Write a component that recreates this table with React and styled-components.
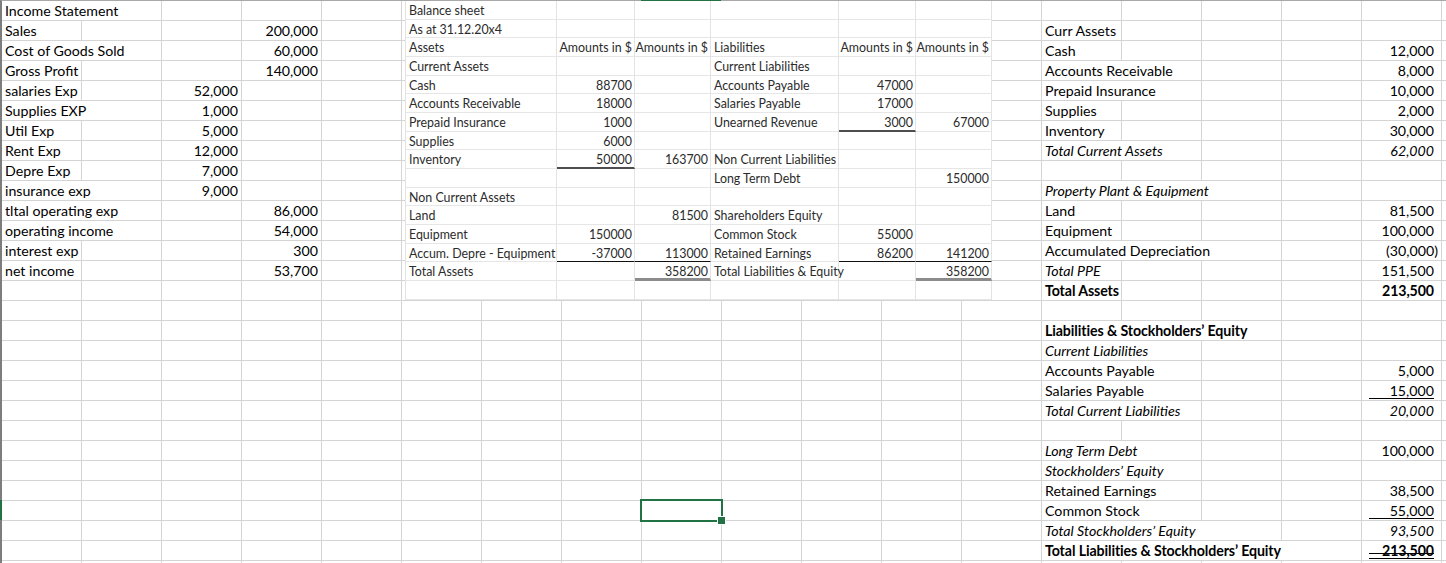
import styled, { createGlobalStyle, css } from 'styled-components';

const COLS = 19;
const ROWS = 29;

const Global = createGlobalStyle`
  html, body {
    margin: 0;
    padding: 0;
    background: #ffffff;
    overflow: hidden;
  }
  * { box-sizing: border-box; }
`

const Sheet = styled.div`
  position: relative;
  width: 1446px;
  height: 563px;
  overflow: hidden;
  background: #ffffff;
  font-family: Lato, "Liberation Sans", sans-serif;
  font-size: 14.2px;
  color: #000000;
`
const Grid = styled.div`
  display: grid;
  grid-template-columns: repeat(${COLS}, 80px);
  grid-auto-rows: 20px;
  width: max-content;
  border-left: 2px solid #7d7d7d;
  border-top: 1px solid #a8a8a8;
`
const Cell = styled.div`
  grid-column: span ${p => p.$span || 1};
  border-right: 1px solid #d4d4d4;
  border-bottom: 1px solid #d4d4d4;
  padding: ${p => (p.$acct ? '0 7px 0 2px' : '0 3px')};
  line-height: 19px;
  white-space: nowrap;
  overflow: visible;
  text-align: ${p => (p.$num || p.$acct ? 'right' : 'left')};
  font-weight: ${p => (p.$b ? 700 : 400)};
  font-style: ${p => (p.$i ? 'italic' : 'normal')};
  letter-spacing: ${p => (p.$b ? '-0.1px' : '0')};
`
const Value = styled.span`
  position: relative;
  display: block;
  margin-left: 5px;
  margin-right: ${p => (p.$neg ? '-4px' : '0')};

  ${p => p.$u === 'single' && css`
    &::after {
      content: '';
      position: absolute;
      left: 0;
      right: 0;
      bottom: 1px;
      border-bottom: 1px solid #000000;
    }
  `}
  ${p => p.$u === 'double' && css`
    &::after {
      content: '';
      position: absolute;
      left: 0;
      right: 0;
      bottom: 1px;
      height: 4px;
      border-top: 1px solid #000000;
      border-bottom: 1px solid #000000;
    }
  `}
`

// pasted picture of a balance sheet, lying over the grid
const Picture = styled.div`
  position: absolute;
  left: 405px;
  top: 1px;
  width: 587px;
  height: 299px;
  background: #ffffff;
  border-left: 1px solid #e3e3e3;
  display: grid;
  grid-template-columns: 151px 78px 76px 128px 77px 76px;
  grid-template-rows: repeat(15, 18.67px) 1fr;
  font-size: 12.4px;
  color: #2b2b2b;
`
const lineStyles = {
  dark: '2px solid #4d4d4d',
  thin: '1px solid #111111',
  total: '3px solid #8c8c8c',
}
const PicCell = styled.div`
  border-right: 1px solid #e3e3e3;
  border-bottom: ${p => lineStyles[p.$line] || '1px solid #e6e6e6'};
  padding: ${p => (p.$num ? '1px 2px 0 0' : '1px 0 0 3px')};
  line-height: 18px;
  white-space: nowrap;
  overflow: visible;
  text-align: ${p => (p.$num ? 'right' : 'left')};
`

const ColMark = styled.div`
  position: absolute;
  left: 641px;
  top: 0;
  width: 80px;
  height: 1px;
  background: #217346;
`
const RowMark = styled.div`
  position: absolute;
  left: 0;
  top: 500px;
  width: 2px;
  height: 20px;
  background: #217346;
`
const Selection = styled.div`
  position: absolute;
  left: 640px;
  top: 499px;
  width: 83px;
  height: 23px;
  border: 2px solid #217346;

  &::after {
    content: '';
    position: absolute;
    right: -5px;
    bottom: -5px;
    width: 7px;
    height: 7px;
    background: #217346;
    border: 1px solid #ffffff;
  }
`

const left = {
  0: [{ c: 0, span: 2, t: 'Income Statement' }],
  1: [{ c: 0, t: 'Sales' }, { c: 3, n: '200,000' }],
  2: [{ c: 0, span: 2, t: 'Cost of Goods Sold' }, { c: 3, n: '60,000' }],
  3: [{ c: 0, t: 'Gross Profit' }, { c: 3, n: '140,000' }],
  4: [{ c: 0, t: 'salaries Exp' }, { c: 2, n: '52,000' }],
  5: [{ c: 0, span: 2, t: 'Supplies EXP' }, { c: 2, n: '1,000' }],
  6: [{ c: 0, t: 'Util Exp' }, { c: 2, n: '5,000' }],
  7: [{ c: 0, t: 'Rent Exp' }, { c: 2, n: '12,000' }],
  8: [{ c: 0, t: 'Depre Exp' }, { c: 2, n: '7,000' }],
  9: [{ c: 0, span: 2, t: 'insurance exp' }, { c: 2, n: '9,000' }],
  10: [{ c: 0, span: 2, t: 'tltal operating exp' }, { c: 3, n: '86,000' }],
  11: [{ c: 0, span: 2, t: 'operating income' }, { c: 3, n: '54,000' }],
  12: [{ c: 0, t: 'interest exp' }, { c: 3, n: '300' }],
  13: [{ c: 0, t: 'net income' }, { c: 3, n: '53,700' }],
}

const right = {
  1: [{ c: 13, t: 'Curr Assets' }],
  2: [{ c: 13, t: 'Cash' }, { c: 17, a: '12,000' }],
  3: [{ c: 13, span: 2, t: 'Accounts Receivable' }, { c: 17, a: '8,000' }],
  4: [{ c: 13, span: 2, t: 'Prepaid Insurance' }, { c: 17, a: '10,000' }],
  5: [{ c: 13, t: 'Supplies' }, { c: 17, a: '2,000' }],
  6: [{ c: 13, t: 'Inventory' }, { c: 17, a: '30,000' }],
  7: [{ c: 13, span: 2, t: 'Total Current Assets', i: true }, { c: 17, a: '62,000', i: true }],
  9: [{ c: 13, span: 3, t: 'Property Plant & Equipment', i: true }],
  10: [{ c: 13, t: 'Land' }, { c: 17, a: '81,500' }],
  11: [{ c: 13, t: 'Equipment' }, { c: 17, a: '100,000' }],
  12: [{ c: 13, span: 3, t: 'Accumulated Depreciation' }, { c: 17, a: '(30,000)', neg: true }],
  13: [{ c: 13, t: 'Total PPE', i: true }, { c: 17, a: '151,500' }],
  14: [{ c: 13, t: 'Total Assets', b: true }, { c: 17, a: '213,500', b: true }],
  16: [{ c: 13, span: 3, t: 'Liabilities & Stockholders’ Equity', b: true }],
  17: [{ c: 13, span: 2, t: 'Current Liabilities', i: true }],
  18: [{ c: 13, span: 2, t: 'Accounts Payable' }, { c: 17, a: '5,000' }],
  19: [{ c: 13, span: 2, t: 'Salaries Payable' }, { c: 17, a: '15,000', u: 'single' }],
  20: [{ c: 13, span: 2, t: 'Total Current Liabilities', i: true }, { c: 17, a: '20,000', i: true }],
  22: [{ c: 13, span: 2, t: 'Long Term Debt', i: true }, { c: 17, a: '100,000' }],
  23: [{ c: 13, span: 2, t: 'Stockholders’ Equity', i: true }],
  24: [{ c: 13, span: 2, t: 'Retained Earnings' }, { c: 17, a: '38,500' }],
  25: [{ c: 13, span: 2, t: 'Common Stock' }, { c: 17, a: '55,000', u: 'single' }],
  26: [{ c: 13, span: 3, t: 'Total Stockholders’ Equity', i: true }, { c: 17, a: '93,500', i: true }],
  27: [{ c: 13, span: 4, t: 'Total Liabilities & Stockholders’ Equity', b: true }, { c: 17, a: '213,500', b: true, u: 'double' }],
}

const picture = [
  [[0, 'Balance sheet']],
  [[0, 'As at 31.12.20x4']],
  [[0, 'Assets'], [1, 'Amounts in $'], [2, 'Amounts in $'], [3, 'Liabilities'], [4, 'Amounts in $'], [5, 'Amounts in $']],
  [[0, 'Current Assets'], [3, 'Current Liabilities']],
  [[0, 'Cash'], [1, '88700'], [3, 'Accounts Payable'], [4, '47000']],
  [[0, 'Accounts Receivable'], [1, '18000'], [3, 'Salaries Payable'], [4, '17000']],
  [[0, 'Prepaid Insurance'], [1, '1000'], [3, 'Unearned Revenue'], [4, '3000', 'dark'], [5, '67000']],
  [[0, 'Supplies'], [1, '6000']],
  [[0, 'Inventory'], [1, '50000', 'dark'], [2, '163700'], [3, 'Non Current Liabilities']],
  [[3, 'Long Term Debt'], [5, '150000']],
  [[0, 'Non Current Assets']],
  [[0, 'Land'], [2, '81500'], [3, 'Shareholders Equity']],
  [[0, 'Equipment'], [1, '150000'], [3, 'Common Stock'], [4, '55000']],
  [[0, 'Accum. Depre - Equipment'], [1, '-37000', 'thin'], [2, '113000', 'thin'], [3, 'Retained Earnings'], [4, '86200', 'thin'], [5, '141200', 'thin']],
  [[0, 'Total Assets'], [2, '358200', 'total'], [3, 'Total Liabilities & Equity'], [5, '358200', 'total']],
  [],
]

function renderRow(r) {
  const defs = [...(left[r] || []), ...(right[r] || [])];
  const byCol = {};
  defs.forEach(d => { byCol[d.c] = d; });
  const out = [];
  let c = 0;
  while (c < COLS) {
    const d = byCol[c];
    if (!d) {
      out.push(<Cell key={`${r}-${c}`} />);
      c += 1;
      continue;
    }
    out.push(
      <Cell key={`${r}-${c}`} $span={d.span} $num={!!d.n} $acct={!!d.a} $b={d.b} $i={d.i}>
        {d.a ? <Value $u={d.u} $neg={d.neg}>{d.a}</Value> : (d.t || d.n)}
      </Cell>
    );
    c += d.span || 1;
  }
  return out;
}

export default function App() {
  const rows = [];
  for (let r = 0; r < ROWS; r++) rows.push(...renderRow(r));

  return (
    <>
      <Global />
      <Sheet>
        <Grid>{rows}</Grid>

        <Picture>
          {picture.map((row, ri) =>
            [0, 1, 2, 3, 4, 5].map(ci => {
              const item = row.find(x => x[0] === ci);
              const isNum = ci === 1 || ci === 2 || ci === 4 || ci === 5;
              return (
                <PicCell key={`${ri}-${ci}`} $num={isNum} $line={item && item[2]}>
                  {item ? item[1] : ''}
                </PicCell>
              );
            })
          )}
        </Picture>

        <ColMark />
        <RowMark />
        <Selection />
      </Sheet>
    </>
  );
}
